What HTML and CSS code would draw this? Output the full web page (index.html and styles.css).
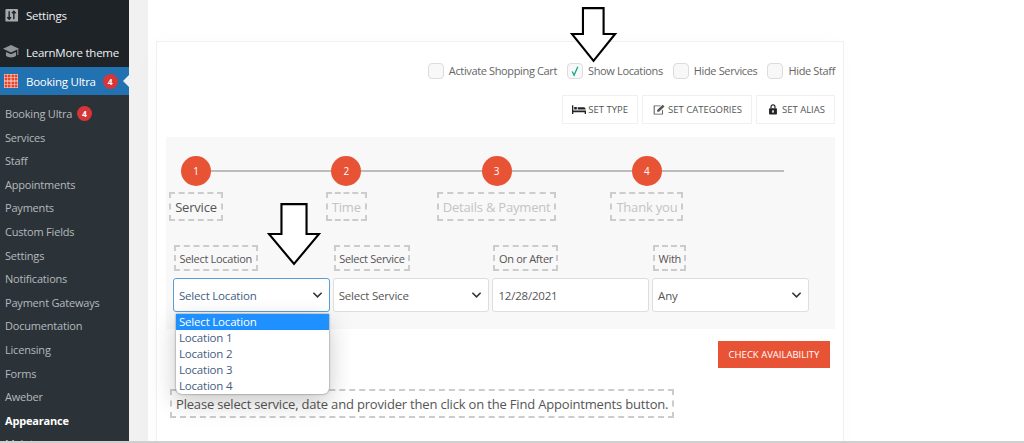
FILE: index.html
```html
<!DOCTYPE html>
<html lang="en">
<head>
<meta charset="utf-8">
<title>Booking Ultra</title>
<link rel="stylesheet" href="styles.css">
</head>
<body>
<div class="page">
  <nav class="sidebar">
    <div class="top-item settings">
      <svg class="menu-icon" viewBox="0 0 16 16"><rect x="1.500" y="1" width="13.500" height="13.500" rx="1" fill="#a7aaad"/><path d="M5.500 3.500v8.500M3.500 9.800 5.500 12l2-2.200M10.500 12V3.500M8.500 5.700l2-2.200 2 2.200" stroke="#1d2327" stroke-width="1.500" fill="none"/></svg>
      <span>Settings</span>
    </div>
    <div class="top-item learn">
      <svg class="menu-icon hat" viewBox="0 0 16 14"><path d="M8 0 0 3.800 8 7.500l6.300-2.900V10h1V4l.7-.3z" fill="#8f9598"/><path d="M3 7v3.800c2 2.300 8 2.300 10 0V7L8 9.300z" fill="#8f9598"/></svg>
      <span>LearnMore theme</span>
    </div>
    <div class="top-item current">
      <svg class="menu-icon" viewBox="0 0 14 14"><rect width="14" height="14" fill="#f4e4dc"/><path d="M.5.500h2.800v2.800H.5zM3.800.500h2.800v2.800H3.800zM7.400.500h2.800v2.800H7.400zM10.700.500h2.800v2.800h-2.800zM.5 3.800h2.800v2.800H.5zM3.800 3.800h2.800v2.800H3.800zM7.400 3.800h2.800v2.800H7.400zM10.700 3.800h2.800v2.800h-2.800zM.5 7.400h2.800v2.800H.5zM3.800 7.400h2.800v2.800H3.800zM7.400 7.400h2.800v2.800H7.400zM10.700 7.400h2.800v2.800h-2.800zM.5 10.700h2.800v2.800H.5zM3.800 10.700h2.800v2.800H3.800zM7.400 10.700h2.800v2.800H7.400zM10.700 10.700h2.800v2.800h-2.800z" fill="#e8452f"/></svg>
      <span>Booking Ultra</span>
      <b class="count">4</b>
      <i class="pointer"></i>
    </div>
    <ul class="submenu">
      <li>Booking Ultra <b class="count">4</b></li>
      <li>Services</li>
      <li>Staff</li>
      <li>Appointments</li>
      <li>Payments</li>
      <li>Custom Fields</li>
      <li>Settings</li>
      <li>Notifications</li>
      <li>Payment Gateways</li>
      <li>Documentation</li>
      <li>Licensing</li>
      <li>Forms</li>
      <li>Aweber</li>
      <li class="active">Appearance</li>
      <li>Maintenance</li>
    </ul>
  </nav>
  <main class="content">
    <section class="card">
      <div class="options">
        <label class="option"><i class="check"></i>Activate Shopping Cart</label>
        <label class="option"><i class="check"><svg viewBox="0 0 15 15"><path d="M4.500 8 6.500 12 10.500 3" fill="none" stroke="#12a88a" stroke-width="1.400"/></svg></i>Show Locations</label>
        <label class="option"><i class="check"></i>Hide Services</label>
        <label class="option"><i class="check"></i>Hide Staff</label>
      </div>
      <div class="actions">
        <button class="tool">
          <svg viewBox="0 0 16 12"><path d="M0 1h1.500v6H16v4h-1.500V9h-13v2H0z" fill="#222"/><path d="M2.500 3h3v3h-3zM6.500 3.500h7c1.200 0 2 .8 2 2.500H6.500z" fill="#222"/></svg>
          SET TYPE
        </button>
        <button class="tool">
          <svg viewBox="0 0 14 12"><path d="M1.200 1.500H9L8 2.500H2.300v8h8V7l1-1v5.500H1.200z" fill="#555"/><path d="M5 6.500 11 .7 13 2.700 7 8.500H5z" fill="#555"/></svg>
          SET CATEGORIES
        </button>
        <button class="tool">
          <svg viewBox="0 0 12 14"><path d="M3.500 5.500V3.500a2.500 2.500 0 0 1 5 0v2" fill="none" stroke="#222" stroke-width="1.500"/><rect x="1" y="5.500" width="10" height="8" rx="1" fill="#222"/><rect x="5" y="8" width="2" height="3" fill="#fff"/></svg>
          SET ALIAS
        </button>
      </div>
      <div class="wizard">
        <div class="steps">
          <div class="step"><span class="dot">1</span><span class="step-name">Service</span></div>
          <div class="step muted"><span class="dot">2</span><span class="step-name">Time</span></div>
          <div class="step muted"><span class="dot">3</span><span class="step-name">Details &amp; Payment</span></div>
          <div class="step muted"><span class="dot">4</span><span class="step-name">Thank you</span></div>
        </div>
        <div class="fields">
          <div class="field">
            <span class="field-label">Select Location</span>
            <div class="control focused"><span>Select Location</span><svg class="chevron" viewBox="0 0 12 8"><path d="M1.500 1.500 6 6l4.500-4.500" fill="none" stroke="#333" stroke-width="1.700"/></svg></div>
            <ul class="dropdown">
              <li class="selected">Select Location</li>
              <li>Location 1</li>
              <li>Location 2</li>
              <li>Location 3</li>
              <li>Location 4</li>
            </ul>
          </div>
          <div class="field">
            <span class="field-label">Select Service</span>
            <div class="control"><span>Select Service</span><svg class="chevron" viewBox="0 0 12 8"><path d="M1.500 1.500 6 6l4.500-4.500" fill="none" stroke="#333" stroke-width="1.700"/></svg></div>
          </div>
          <div class="field">
            <span class="field-label">On or After</span>
            <div class="control"><span>12/28/2021</span></div>
          </div>
          <div class="field">
            <span class="field-label">With</span>
            <div class="control"><span>Any</span><svg class="chevron" viewBox="0 0 12 8"><path d="M1.500 1.500 6 6l4.500-4.500" fill="none" stroke="#333" stroke-width="1.700"/></svg></div>
          </div>
        </div>
      </div>
      <div class="submit-row"><button class="check-btn">CHECK AVAILABILITY</button></div>
      <p class="message">Please select service, date and provider then click on the Find Appointments button.</p>
    </section>
  </main>
  <svg class="arrow arrow-top" viewBox="0 0 50 59"><path d="M13.500 2H35V29H47L24.500 57 2 29H13.500z" fill="#fff" stroke="#000" stroke-width="2.200"/></svg>
  <svg class="arrow arrow-field" viewBox="0 0 56 66"><path d="M15 2H41V33H54L28 64 2 33H15z" fill="#fff" stroke="#000" stroke-width="2.200"/></svg>
</div>
</body>
</html>
```
FILE: styles.css
```css
* { box-sizing: border-box; }
html, body { margin: 0; height: 100%; overflow: hidden; background: #fff; }
body { font-family: "Open Sans", "Noto Sans", sans-serif; }
.page {
  position: relative;
  display: flex;
  width: 1024px;
  height: 443px;
  overflow: hidden;
  border-bottom: 2px solid #cfcfcf;
}
ul { list-style: none; margin: 0; padding: 0; }

.sidebar {
  flex: 0 0 129px;
  background: #1d2327;
  color: #f0f0f1;
  font-size: 11.500px;
  letter-spacing: -.25px;
}
.top-item {
  display: flex;
  align-items: center;
  gap: 7px;
  height: 28px;
  padding-left: 4px;
  position: relative;
}
.settings { margin-top: 1px; margin-bottom: 1px; }
.learn { margin-top: 9px; margin-bottom: 1px; }
.menu-icon { width: 15px; height: 15px; flex: none; }
.current .menu-icon { width: 14px; height: 14px; margin-right: 1px; }
.hat { margin-left: -1px; width: 16px; height: 14px; }
.current { background: #2271b1; color: #fff; }
.count {
  display: inline-flex;
  align-items: center;
  justify-content: center;
  width: 15px;
  height: 15px;
  border-radius: 50%;
  background: #d63638;
  color: #fff;
  font-size: 8.500px;
  font-weight: 700;
  letter-spacing: 0;
}
.pointer {
  position: absolute;
  right: 0;
  top: 8px;
  border: 6px solid transparent;
  border-right-color: #f1f1f1;
  border-left-width: 0;
}
.submenu {
  background: #2c3338;
  color: #b4b9be;
  font-size: 11px;
  letter-spacing: -.2px;
  padding: 7px 0 0 5px;
  height: 400px;
}
.submenu li { height: 23.600px; line-height: 23.600px; white-space: nowrap; }
.submenu .count { margin-left: 2px; vertical-align: 1px; }
.submenu .active { color: #fff; font-weight: 700; }

.content {
  flex: 1;
  background: #fff;
  border-left: 19px solid #f1f1f1;
  padding: 41px 0 0 8px;
}
.card {
  width: 688px;
  height: 420px;
  border: 1px solid #f0f0f0;
  border-bottom: 0;
  padding: 20px 8px 0 9px;
  box-shadow: -4px 0 22px rgba(0, 0, 0, .02);
}
.options {
  display: flex;
  justify-content: flex-end;
  align-items: center;
  gap: 10px;
  height: 17px;
  font-size: 11px;
  letter-spacing: -.36px;
  color: #666;
}
.option { display: flex; align-items: center; gap: 5px; }
.check {
  display: block;
  width: 16px;
  height: 16px;
  border: 1px solid #dcdcdc;
  border-radius: 4px;
  background: #f8f8f8;
}
.check svg { display: block; width: 14px; height: 14px; }
.actions {
  display: flex;
  justify-content: flex-end;
  gap: 4px;
  margin-top: 16px;
}
.tool {
  display: inline-flex;
  align-items: center;
  justify-content: center;
  gap: 2px;
  height: 29px;
  padding: 0 9px;
  border: 1px solid #f0f0f0;
  background: #fff;
  color: #555;
  font: 400 9.500px "Open Sans", sans-serif;
}
.tool svg { width: 14px; height: 11px; }
.wizard {
  position: relative;
  height: 192px;
  margin-top: 13px;
  background: #f8f8f8;
  padding: 19px 0 0 7px;
}
.wizard::before {
  content: "";
  position: absolute;
  left: 15px;
  top: 33px;
  width: 603px;
  height: 2px;
  background: #bdbdbd;
}
.steps {
  position: relative;
  display: flex;
  gap: 120.300px;
  padding-left: 8px;
}
.step {
  display: flex;
  flex-direction: column;
  align-items: center;
  width: 30px;
  color: #555;
}
.dot {
  display: flex;
  align-items: center;
  justify-content: center;
  flex: none;
  width: 30px;
  height: 30px;
  border-radius: 50%;
  background: #e95335;
  color: #fff;
  font-size: 10px;
}
.step-name {
  flex: none;
  margin-top: 6px;
  padding: 0 4px;
  height: 29px;
  line-height: 27px;
  border: 2px dashed #ccc;
  font-size: 13px;
  letter-spacing: -.2px;
  white-space: nowrap;
}
.muted .step-name { color: #c4c4c4; }
.fields {
  display: flex;
  gap: 3px;
  margin-top: 24px;
}
.field { position: relative; width: 156.700px; }
.field-label {
  display: inline-block;
  height: 26px;
  line-height: 24px;
  margin-left: 1px;
  padding: 0 3.500px;
  border: 2px dashed #ccc;
  font-size: 11px;
  letter-spacing: -.3px;
  color: #555;
}
.control {
  display: flex;
  align-items: center;
  justify-content: space-between;
  height: 34px;
  margin-top: 7px;
  padding: 0 5px;
  background: #fff;
  border: 1px solid #dedede;
  border-radius: 3px;
  font-size: 11.500px;
  letter-spacing: -.2px;
  color: #555;
}
.focused { border-color: #5b9dd9; color: #43607f; }
.chevron { width: 11px; height: 8px; margin-right: 1px; }
.dropdown {
  position: absolute;
  top: 69px;
  left: 3px;
  width: 153px;
  height: 80px;
  overflow: hidden;
  background: #fff;
  border-radius: 0 0 6px 6px;
  box-shadow: 0 0 2px rgba(0, 0, 0, .6), 0 8px 24px rgba(0, 0, 0, .22);
  font-size: 11.500px;
  letter-spacing: -.2px;
  color: #43607f;
  z-index: 1;
}
.dropdown li { height: 16px; line-height: 16px; padding-left: 3px; white-space: nowrap; }
.dropdown .selected { background: #1e90ff; color: #fff; }
.submit-row {
  display: flex;
  justify-content: flex-end;
  padding-right: 5px;
  margin-top: 12px;
}
.check-btn {
  width: 112px;
  height: 27px;
  padding: 0;
  border: 0;
  background: #e95335;
  color: #fff;
  font: 400 9.500px "Open Sans", sans-serif;
}
.message {
  display: inline-block;
  height: 29px;
  line-height: 26px;
  margin: 21px 0 0 4px;
  padding: 0 4px;
  border: 2px dashed #ccc;
  font-size: 13px;
  letter-spacing: -.18px;
  color: #555;
  white-space: nowrap;
}
.arrow { position: absolute; z-index: 2; }
.arrow-top { left: 570px; top: 6px; width: 48px; height: 57px; }
.arrow-field { left: 267px; top: 202px; width: 54px; height: 64px; }
```
